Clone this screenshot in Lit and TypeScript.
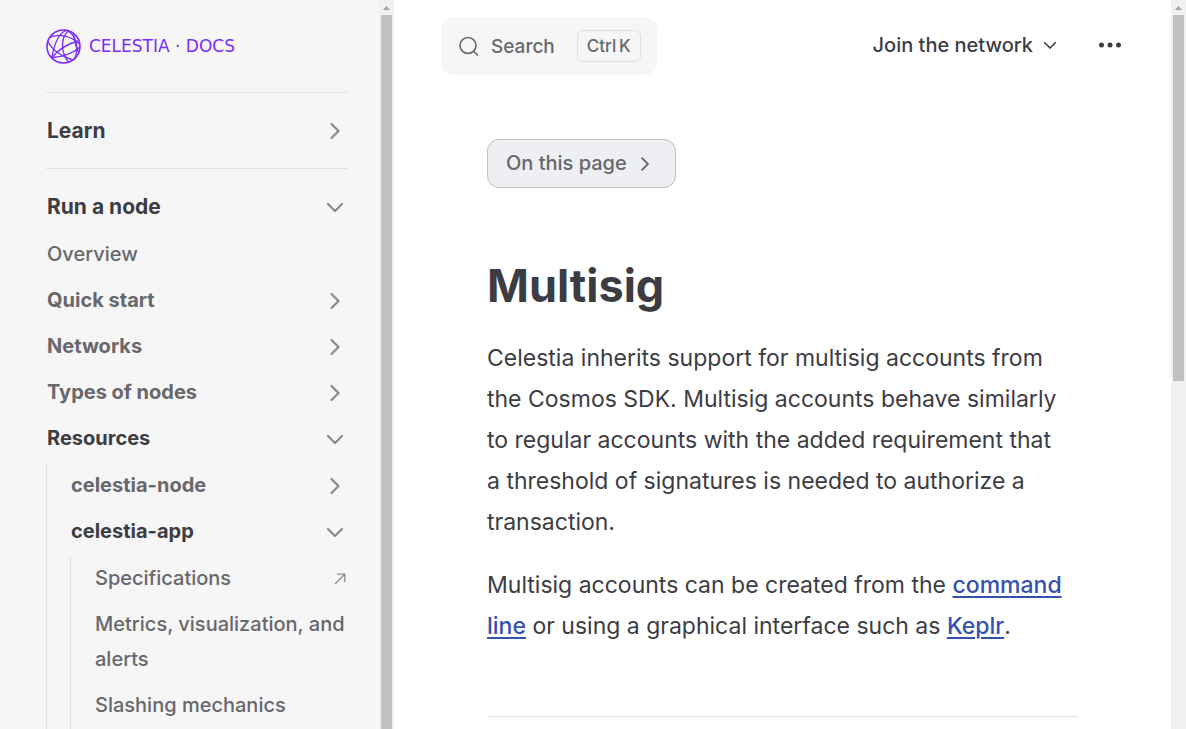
import { LitElement, html, css, svg, nothing, TemplateResult } from "lit";
import { customElement, property, state } from "lit/decorators.js";

interface NavItem {
  text: string;
  items?: NavItem[];
  open?: boolean;
  external?: boolean;
}

const NAV: NavItem[] = [
  { text: "Learn", open: false, items: [] },
  {
    text: "Run a node",
    open: true,
    items: [
      { text: "Overview" },
      { text: "Quick start", items: [] },
      { text: "Networks", items: [] },
      { text: "Types of nodes", items: [] },
      {
        text: "Resources",
        open: true,
        items: [
          { text: "celestia-node", items: [] },
          {
            text: "celestia-app",
            open: true,
            items: [
              { text: "Specifications", external: true },
              { text: "Metrics, visualization, and alerts" },
              { text: "Slashing mechanics" },
            ],
          },
        ],
      },
    ],
  },
];

const chevronRight = (size: number, width = 2) => html`<svg width=${size} height=${size} viewBox="0 0 24 24" fill="none" stroke="currentColor" stroke-width=${width} stroke-linecap="round" stroke-linejoin="round" aria-hidden="true">${svg`<path d="M8.5 5l7 7-7 7" />`}</svg>`;
const chevronDown = (size: number, width = 2) => html`<svg width=${size} height=${size} viewBox="0 0 24 24" fill="none" stroke="currentColor" stroke-width=${width} stroke-linecap="round" stroke-linejoin="round" aria-hidden="true">${svg`<path d="M5 9l7 7 7-7" />`}</svg>`;

@customElement("scroll-rail")
export class ScrollRail extends LitElement {
  @property({ type: Number }) extent = 100;

  static styles = css`
    :host { display: flex; flex-direction: column; align-items: center; background: #f0f0f0; }
    svg { display: block; flex: none; }
    .track { flex: 1; width: 11px; }
    .thumb { background: #c0c0c0; }
  `;

  render() {
    return html`
      <svg width="11" height="15" viewBox="0 0 11 15" aria-hidden="true"><path d="M2 10L5.5 6L9 10z" fill="#a3a3a3" /></svg>
      <div class="track"><div class="thumb" style="height:${this.extent}%"></div></div>
    `;
  }
}

@customElement("docs-sidebar")
export class DocsSidebar extends LitElement {
  @state() private nav: NavItem[] = NAV;

  static styles = css`
    :host { display: block; box-sizing: border-box; padding: 0 31px 0 46px; background: #f6f6f7; overflow: hidden; color: #67676c; font-size: 20px; line-height: 35px; font-weight: 500; }
    .logo { display: flex; align-items: center; gap: 8px; height: 92px; color: #7b2bf9; text-decoration: none; font: 500 17px/24px "DejaVu Sans", sans-serif; white-space: nowrap; }
    .logo svg { flex: none; }
    .group { border-top: 1px solid #e2e2e3; padding: 15px 0 14px; }
    ul { list-style: none; margin: 2px 0 0; padding: 0; }
    .nested { margin-top: 1px; border-left: 1px solid #e2e2e3; padding-left: 23px; }
    .row { display: flex; width: 100%; align-items: center; justify-content: space-between; box-sizing: border-box; margin: 0; border: 0; padding: 5px 0 6px 1px; background: none; color: inherit; font: inherit; text-align: left; text-decoration: none; cursor: pointer; }
    .row.branch { font-weight: 700; }
    .row.title { font-size: 21px; }
    .row.active { color: #3c3c43; }
    .row svg { flex: none; color: #8a8a8d; }
    .branch svg { margin-right: 1px; }
    .arrow { margin-right: 2px; }
  `;

  private toggle(item: NavItem) {
    item.open = !item.open;
    this.nav = [...this.nav];
  }

  private item(item: NavItem, depth: number): TemplateResult {
    if (!item.items) {
      return html`<a class="row" href="#"><span>${item.text}</span>${item.external
        ? html`<svg class="arrow" width="12" height="12" viewBox="0 0 12 12" fill="none" stroke="currentColor" stroke-width="1.3" aria-hidden="true"><path d="M1 11L11 1M3 1.2H10.8V9" /></svg>`
        : nothing}</a>`;
    }
    const active = item.open || depth === 0;
    return html`
      <button class="row branch ${active ? "active" : ""} ${depth === 0 ? "title" : ""}" aria-expanded=${item.open ? "true" : "false"} @click=${() => this.toggle(item)}>
        <span>${item.text}</span>${item.open ? chevronDown(24, 2.2) : chevronRight(24, 2.2)}
      </button>
      ${item.open ? html`<ul class=${depth > 0 ? "nested" : ""}>${item.items.map((c) => html`<li>${this.item(c, depth + 1)}</li>`)}</ul>` : nothing}
    `;
  }

  render() {
    return html`
      <a class="logo" href="#">
        <svg width="35" height="35" viewBox="0 0 35 35" fill="none" stroke="currentColor" stroke-width="1.3" aria-hidden="true">
          <circle cx="17.5" cy="17.5" r="16.5" stroke-width="1.6" />
          <path d="M4 8.5C12 4.500 24 6 33.500 15" />
          <path d="M22.500 1.800C14 9 15 24 22.500 33" />
          <path d="M20 1.500C14 4 9 11 6 28" />
          <path d="M22 2C31 8 33 19 28.500 30" />
          <path d="M6 28.500C12 21 21 15 32 12" />
          <path d="M2 12.500C6 21 16 28 27 31" />
          <path d="M6 28.500C17 28 27 24 34 18" />
          <path d="M27.500 4.500C28 11 30 18 32.500 23" />
        </svg>
        <span>CELESTIA · DOCS</span>
      </a>
      <nav aria-label="Sidebar">${this.nav.map((g) => html`<section class="group">${this.item(g, 0)}</section>`)}</nav>
    `;
  }
}

@customElement("docs-header")
export class DocsHeader extends LitElement {
  static styles = css`
    :host { display: flex; align-items: flex-start; justify-content: space-between; padding: 17px 49px 0 47px; }
    button { border: 0; margin: 0; padding: 0; background: none; font: inherit; color: inherit; cursor: pointer; display: flex; align-items: center; }
    .search { height: 58px; box-sizing: border-box; border-radius: 12px; padding: 0 16px 0 18px; background: #f6f6f7; color: #67676c; font-size: 19px; font-weight: 500; }
    .search svg { margin-right: 12px; }
    kbd { margin-left: 22px; border: 1px solid #e2e2e3; border-radius: 6px; padding: 0 9px; font: 500 17px/30px Inter, sans-serif; }
    .actions { display: flex; align-items: center; gap: 39px; color: #3c3c43; font-size: 20px; font-weight: 500; line-height: 56px; }
    .menu { gap: 8px; }
  `;

  render() {
    return html`
      <button class="search" aria-label="Search">
        <svg width="20" height="20" viewBox="0 0 20 20" fill="none" stroke="currentColor" stroke-width="1.6" aria-hidden="true"><circle cx="9" cy="9.500" r="8" /><path d="M14.700 15.200L19 19.500" /></svg>
        <span>Search</span>
        <kbd>Ctrl&#8201;K</kbd>
      </button>
      <div class="actions">
        <button class="menu">Join the network ${chevronDown(18, 2.2)}</button>
        <button aria-label="More">
          <svg width="24" height="24" viewBox="0 0 24 24" fill="currentColor" aria-hidden="true"><circle cx="3.500" cy="12" r="2.500" /><circle cx="12" cy="12" r="2.500" /><circle cx="20.500" cy="12" r="2.500" /></svg>
        </button>
      </div>
    `;
  }
}

@customElement("app-root")
export class AppRoot extends LitElement {
  static styles = css`
    :host { display: grid; grid-template-columns: 379px 15px minmax(0, 1fr) 15px; height: 100vh; overflow: hidden; background: #fff; font-family: Inter, sans-serif; color: #3c3c43; }
    main { overflow: hidden; }
    article { max-width: 591px; margin: 0 auto; padding: 64px 24px 0; }
    .outline { display: flex; align-items: center; gap: 8px; margin: 0; height: 49px; border: 1px solid #c2c2c4; border-radius: 12px; padding: 0 20px 0 18px; background: #eeeff3; color: #67676c; font: 500 20px/35px Inter, sans-serif; cursor: pointer; }
    h1 { margin: 69px 0 0; font-size: 45px; line-height: 58px; font-weight: 700; }
    p { margin: 22px 0; font-size: 23px; line-height: 41px; }
    h1 + p { margin-top: 23px; }
    p a { color: #3451b2; font-weight: 500; text-decoration: underline; text-underline-offset: 3px; text-decoration-thickness: 2px; }
    hr { margin: 69px 0 0; border: 0; border-top: 1px solid #e2e2e3; }
  `;

  render() {
    return html`
      <docs-sidebar></docs-sidebar>
      <scroll-rail .extent=${100}></scroll-rail>
      <main>
        <docs-header></docs-header>
        <article>
          <button class="outline">On this page ${chevronRight(20, 2.2)}</button>
          <h1>Multisig</h1>
          <p>
            Celestia inherits support for multisig accounts from the Cosmos SDK. Multisig accounts behave similarly to
            regular accounts with the added requirement that a&nbsp;threshold of signatures is needed to authorize a
            transaction.
          </p>
          <p>
            Multisig accounts can be created from the <a href="#">command line</a> or using a graphical interface such
            as <a href="#">Keplr</a>.
          </p>
          <hr />
        </article>
      </main>
      <scroll-rail .extent=${51.3}></scroll-rail>
    `;
  }
}
